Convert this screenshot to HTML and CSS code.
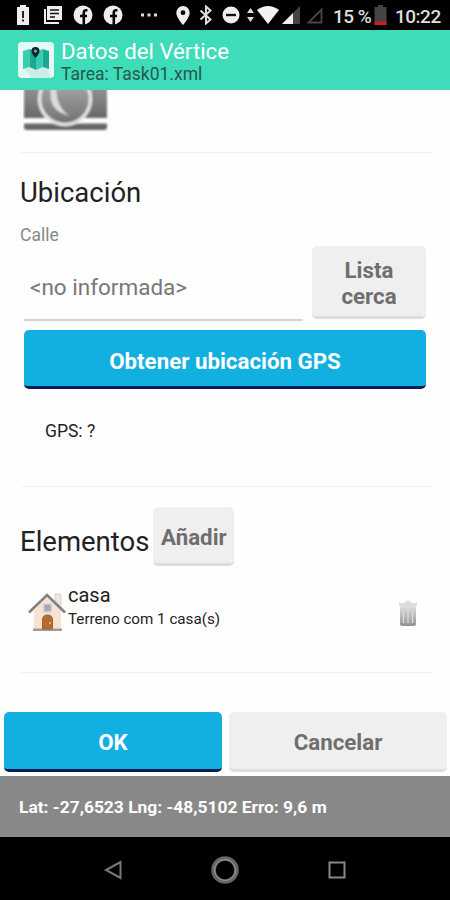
FILE: index.html
```
<!DOCTYPE html>
<html lang="es">
<head>
<meta charset="utf-8">
<title>Datos del Vértice</title>
<link rel="stylesheet" href="styles.css">
</head>
<body>
<div class="screen">
  <div class="status">
    <svg class="s-alert" width="14" height="20" viewBox="0 0 14 20"><path fill="#eee" d="M4 0h6v2h3v18H1V2h3z"/><path stroke="#222" stroke-width="2" d="M7 6v7M7 14.500v2"/></svg>
    <svg class="s-news" width="20" height="20" viewBox="0 0 20 20"><path fill="#eee" d="M4 1h15v14H4z"/><path fill="none" stroke="#eee" stroke-width="2" d="M2 4v14h14"/><path stroke="#111" stroke-width="1.500" d="M7 5h9M7 8.500h9M7 12h5"/></svg>
    <svg class="s-fb" width="20" height="20" viewBox="0 0 20 20"><circle cx="10" cy="10" r="9.500" fill="#eee"/><path fill="none" stroke="#080808" stroke-width="2.600" d="M14.500 5.200h-1.300q-2.400 0-2.400 2.400V20M7 11h7"/></svg>
    <svg class="s-fb2" width="20" height="20" viewBox="0 0 20 20"><circle cx="10" cy="10" r="9.500" fill="#eee"/><path fill="none" stroke="#080808" stroke-width="2.600" d="M14.500 5.200h-1.300q-2.400 0-2.400 2.400V20M7 11h7"/></svg>
    <svg class="s-dots" width="18" height="4" viewBox="0 0 18 4"><path fill="#ddd" d="M1 .5h3v3H1zM7.500 .5h3v3h-3zM14 .5h3v3h-3z"/></svg>
    <svg class="s-pin" width="14" height="19" viewBox="0 0 14 19"><path fill="#eee" fill-rule="evenodd" d="M7 0a6.700 6.700 0 0 0-6.700 6.700C.3 11.500 7 19 7 19s6.700-7.500 6.700-12.300A6.700 6.700 0 0 0 7 0zm0 4.300a2.400 2.400 0 1 1 0 4.800 2.400 2.400 0 0 1 0-4.800z"/></svg>
    <svg class="s-bt" width="14" height="20" viewBox="0 0 14 20"><path fill="none" stroke="#ddd" stroke-width="2" d="M1.500 5.500l10 9-4.500 4v-17l4.500 4-10 9"/></svg>
    <svg class="s-dnd" width="18" height="18" viewBox="0 0 18 18"><circle cx="9" cy="9" r="8.500" fill="#eee"/><path stroke="#111" stroke-width="2.400" d="M4 9h10"/></svg>
    <svg class="s-arrows" width="7" height="14" viewBox="0 0 7 14"><path fill="#ddd" d="M3.500 0L7 5H0zM0 9h7l-3.500 5z"/></svg>
    <svg class="s-wifi" width="22" height="18" viewBox="0 0 22 18"><path fill="#f2f2f2" d="M0 4Q11-4 22 4L11 18z"/></svg>
    <svg class="s-sig" width="18" height="18" viewBox="0 0 18 18"><path fill="#444" d="M18 0v18H0z"/><path fill="#eee" d="M11 7v11H0z"/></svg>
    <svg class="s-sig2" width="17" height="17" viewBox="0 0 17 17"><path fill="none" stroke="#484848" stroke-width="1.800" d="M15.500 2.500v13h-13z"/></svg>
    <span class="pct">15 %</span>
    <svg class="s-bat" width="13" height="20" viewBox="0 0 13 20"><path fill="#444" d="M4 0h5v2h3.500v18H.5V2H4z"/><path fill="#c81e2a" d="M.5 16.500h12V20H.5z"/></svg>
    <span class="time">10:22</span>
  </div>

  <header class="appbar">
    <svg class="logo" width="36" height="36" viewBox="0 0 36 36"><rect width="36" height="36" rx="4" fill="#e4faf5"/><path fill="#cdeee6" d="M6 27l6-2 6 3 6-3 6 2 3 9H14z"/><path fill="#35cfae" d="M5 9l6.500-2v18L5 27zM18 10l6.500-3v18L18 28z"/><path fill="#19aa91" d="M11.500 7l6.500 3v18l-6.500-3zM24.500 7L31 9v18l-6.500-2z"/><path fill="#10242f" d="M17.500 5a4 4 0 0 0-4 4c0 3 4 7 4 7s4-4 4-7a4 4 0 0 0-4-4z"/><circle cx="17.500" cy="9" r="1.500" fill="#78bcb8"/></svg>
    <div class="heading">
      <div class="title">Datos del Vértice</div>
      <div class="task">Tarea: Task01.xml</div>
    </div>
  </header>

  <main class="content">
    <svg class="camera" width="86" height="44" viewBox="0 0 86 44">
      <defs>
        <linearGradient id="body" x1="0" y1="0" x2="0" y2="1"><stop offset="0" stop-color="#969696"/><stop offset="1" stop-color="#686868"/></linearGradient>
        <linearGradient id="lens" x1="0" y1="0" x2="0" y2="1"><stop offset=".3" stop-color="#a0a0a0"/><stop offset="1" stop-color="#707070"/></linearGradient>
        <filter id="soft" x="-5%" y="-5%" width="110%" height="110%"><feGaussianBlur stdDeviation=".8"/></filter>
      </defs>
      <g filter="url(#soft)">
        <path fill="url(#body)" d="M1-5h83v33H1z"/>
        <path fill="#666" d="M1 33.500h83V37q0 3-3 3H4q-3 0-3-3z"/>
        <circle cx="42" cy="9" r="25.500" fill="url(#lens)" stroke="#e4e4e4" stroke-width="3.500"/>
        <path fill="#dcdcdc" d="M28-2q-4 23 19 28-13-7-14-28z"/>
      </g>
    </svg>
    <hr class="rule">

    <h2 class="section-title">Ubicación</h2>
    <label class="label">Calle</label>
    <div class="street">
      <div class="field">&lt;no informada&gt;</div>
      <div class="btn nearby">Lista<br>cerca</div>
    </div>
    <div class="btn primary locate">Obtener ubicación GPS</div>
    <div class="gps">GPS: ?</div>
    <hr class="rule">

    <div class="elements">
      <h2 class="section-title">Elementos</h2>
      <div class="btn add">Añadir</div>
    </div>
    <div class="item">
      <svg class="house" width="40" height="42" viewBox="0 0 40 42"><path fill="#efe6df" stroke="#dcd3cc" d="M28 3h6v14h-6z"/><path fill="#f6e3d4" d="M7 19L20 5l14 14v20H7z"/><path fill="#a49a94" d="M6 37.500h29V40H6z"/><path fill="none" stroke="#858180" stroke-width="2.600" d="M2 21.500L20 4l18 17.500"/><path fill="#b86b31" stroke="#a0622f" d="M15.500 38V29q0-5 5-5t5 5v9z"/><circle cx="23" cy="32" r="1" fill="#efc378"/><path fill="#a4a9b5" stroke="#dcd6d4" stroke-width="1.500" d="M16.500 13h8v8h-8z"/></svg>
      <div class="item-text">
        <div class="item-name">casa</div>
        <div class="item-desc">Terreno com 1 casa(s)</div>
      </div>
      <svg class="trash" width="22" height="28" viewBox="0 0 22 28"><defs><linearGradient id="bin" x1="0" y1="0" x2="0" y2="1"><stop offset="0" stop-color="#e0e0e0"/><stop offset="1" stop-color="#929292"/></linearGradient></defs><path fill="#ddd" d="M8 1h6v2h6v3H2V3h6z"/><path fill="url(#bin)" d="M3 6h16v18q0 2-2 2H5q-2 0-2-2z"/><path stroke="#ddd" stroke-width="1.200" d="M6.500 9v14M11 9v14M15.500 9v14"/></svg>
    </div>
    <hr class="rule">

    <div class="actions">
      <div class="btn primary">OK</div>
      <div class="btn">Cancelar</div>
    </div>
  </main>

  <footer class="position">Lat: -27,6523 Lng: -48,5102 Erro: 9,6 m</footer>
  <nav class="nav">
    <svg width="20" height="22" viewBox="0 0 20 22"><path fill="none" stroke="#777" stroke-width="2" d="M17.500 3v16L3 11z"/></svg>
    <svg width="30" height="30" viewBox="0 0 30 30"><circle cx="15" cy="15" r="11.500" fill="none" stroke="#666" stroke-width="4.600"/><circle cx="15" cy="15" r="10.500" fill="none" stroke="#999" stroke-width="1"/></svg>
    <svg width="20" height="20" viewBox="0 0 20 20"><path fill="none" stroke="#888" stroke-width="2" d="M2.500 2.500h15v15h-15z"/></svg>
  </nav>
</div>
</body>
</html>
```
FILE: styles.css
```
* { box-sizing: border-box; }
body { margin: 0; font-family: Roboto, sans-serif; color: #222; background: #fff; }
svg { display: block; flex: none; }
.screen { width: 450px; height: 900px; display: flex; flex-direction: column; overflow: hidden; }

.status { height: 30px; flex: none; background: #000; color: #ddd; display: flex; align-items: center; white-space: nowrap; font-weight: 500; }
.s-alert { margin-left: 16px; }
.s-news { margin-left: 13px; }
.s-fb { margin-left: 10px; }
.s-fb2 { margin-left: 10px; }
.s-dots { margin-left: 17px; }
.s-pin { margin-left: 18px; }
.s-bt { margin-left: 9px; }
.s-dnd { margin-left: 9px; }
.s-arrows { margin-left: 7px; }
.s-wifi { margin-left: 3px; }
.s-sig { margin-left: 3px; }
.s-sig2 { margin-left: 6px; }
.pct { margin-left: 10px; width: 38px; font-size: 19px; letter-spacing: -.5px; padding-top: 2px; }
.s-bat { margin-left: 3px; }
.time { margin-left: 8px; font-size: 19px; letter-spacing: -.5px; padding-top: 2px; }

.appbar { height: 60px; flex: none; background: #3edcb8; display: flex; align-items: center; padding-left: 18px; gap: 7px; }
.title { color: #fff; font-size: 22.2px; line-height: 24px; }
.heading { padding-top: 3px; }
.task { color: #24594e; font-size: 17.5px; line-height: 22px; }

.content { height: 686px; flex: none; background: #fefefe; }
.camera { margin-left: 23px; }
.rule { border: 0; height: 1px; background: #f1f1f1; margin: 0 18px 0 21px; }
.camera + .rule { margin-top: 18px; }
.section-title { margin: 0; font-size: 27.5px; line-height: 32px; font-weight: 400; color: #222; padding-left: 20px; }
.rule + .section-title { margin-top: 24px; }
.label { display: block; margin: 16px 0 0 20px; font-size: 17.5px; line-height: 20px; color: #888; }
.street { display: flex; justify-content: space-between; padding: 0 24px; height: 76px; margin-top: 1px; }
.field { width: 279px; height: 75px; line-height: 82px; font-size: 22.5px; color: #777; padding-left: 6px; border-bottom: 2px solid #d4d4d4; }

.btn { background: #efefef; color: #6e6e6e; border-radius: 5px; border-bottom: 3px solid #ddd; font-size: 22.300px; font-weight: 700; text-align: center; height: 60px; line-height: 61px; }
.primary { background: #12afe1; color: #fff; border-bottom-color: #071e55; }
.nearby { width: 114px; height: 73px; line-height: 26px; padding-top: 11px; }
.locate { margin: 8px 24px 0; height: 59px; line-height: 62px; }
.gps { margin: 31px 0 0 45px; font-size: 17.5px; line-height: 22px; }
.gps + .rule { margin-top: 44px; }
.elements { display: flex; margin-top: 20px; gap: 4px; }
.elements .section-title { line-height: 69px; height: 60px; }
.add { width: 81px; height: 59px; line-height: 60px; }
.item { display: flex; margin: 18px 31px 0 27px; height: 50px; }
.house { margin-top: 6px; }
.item-text { margin-left: 1px; flex: 1; }
.item-name { font-size: 20px; line-height: 20px; }
.item-desc { font-size: 15.2px; line-height: 20px; margin-top: 4px; }
.trash { margin-top: 15px; }
.item + .rule { margin-top: 37px; }
.actions { display: grid; grid-template-columns: 218px 218px; gap: 7px; padding-left: 4px; margin-top: 39px; }

.position { height: 61px; flex: none; background: #888; color: #fff; font-size: 17.4px; font-weight: 700; line-height: 62px; padding-left: 19px; white-space: nowrap; }
.nav { height: 63px; background: #000; display: flex; align-items: center; justify-content: space-between; padding: 3px 103px 0 103px; }
```
